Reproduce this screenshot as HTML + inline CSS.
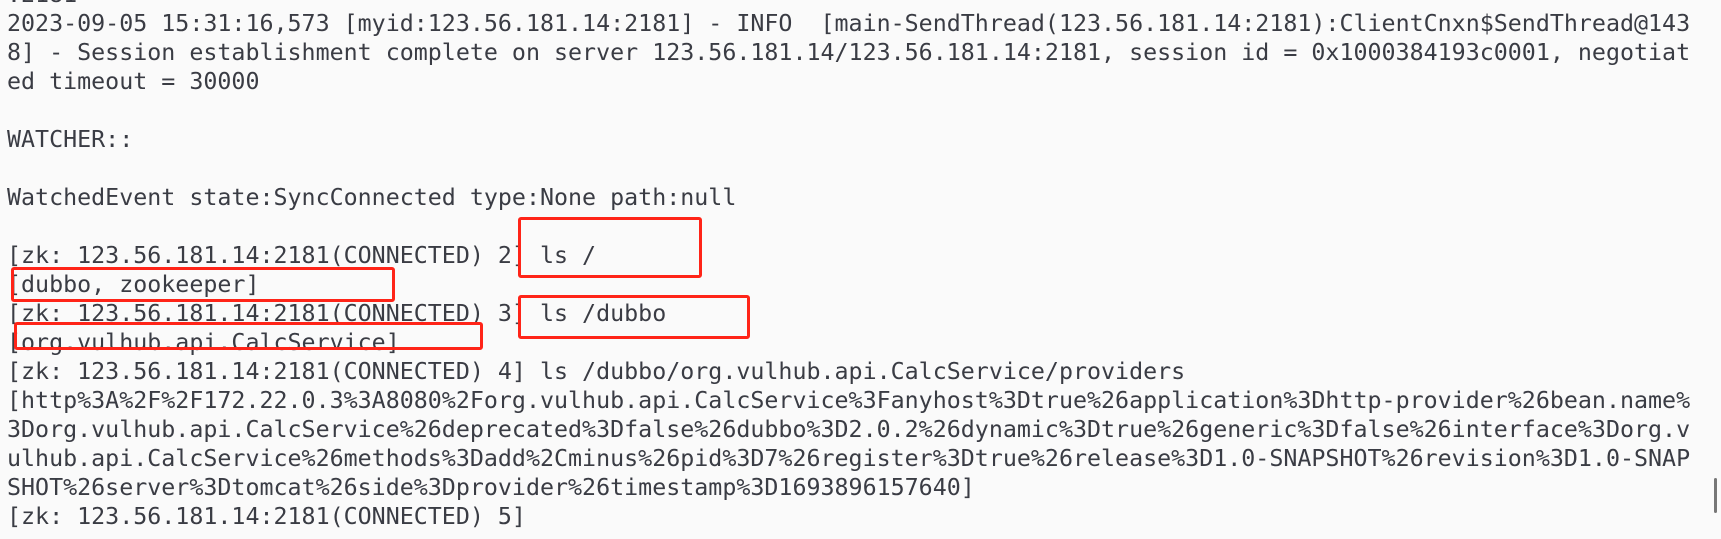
<!DOCTYPE html>
<html><head><meta charset="utf-8"><style>
html,body{margin:0;padding:0;background:#fafafa;width:1721px;height:539px;overflow:hidden;position:relative}
pre{position:absolute;left:7px;top:-20.5px;margin:0;font-family:"DejaVu Sans Mono","Liberation Mono",monospace;font-size:23.3px;line-height:29px;color:#3a3c44;white-space:pre;letter-spacing:0}
.b{position:absolute;border:3px solid #ff2418;border-radius:3px;box-sizing:border-box}
.sb{position:absolute;left:1714px;top:478px;width:3px;height:35px;background:#777;border-radius:2px}
</style></head><body>
<pre>:2181
2023-09-05 15:31:16,573 [myid:123.56.181.14:2181] - INFO  [main-SendThread(123.56.181.14:2181):ClientCnxn$SendThread@143
8] - Session establishment complete on server 123.56.181.14/123.56.181.14:2181, session id = 0x1000384193c0001, negotiat
ed timeout = 30000

WATCHER::

WatchedEvent state:SyncConnected type:None path:null

[zk: 123.56.181.14:2181(CONNECTED) 2] ls /
[dubbo, zookeeper]
[zk: 123.56.181.14:2181(CONNECTED) 3] ls /dubbo
[org.vulhub.api.CalcService]
[zk: 123.56.181.14:2181(CONNECTED) 4] ls /dubbo/org.vulhub.api.CalcService/providers
[http%3A%2F%2F172.22.0.3%3A8080%2Forg.vulhub.api.CalcService%3Fanyhost%3Dtrue%26application%3Dhttp-provider%26bean.name%
3Dorg.vulhub.api.CalcService%26deprecated%3Dfalse%26dubbo%3D2.0.2%26dynamic%3Dtrue%26generic%3Dfalse%26interface%3Dorg.v
ulhub.api.CalcService%26methods%3Dadd%2Cminus%26pid%3D7%26register%3Dtrue%26release%3D1.0-SNAPSHOT%26revision%3D1.0-SNAP
SHOT%26server%3Dtomcat%26side%3Dprovider%26timestamp%3D1693896157640]
[zk: 123.56.181.14:2181(CONNECTED) 5]</pre>
<div class="b" style="left:518px;top:217px;width:184px;height:61px"></div>
<div class="b" style="left:11px;top:267px;width:384px;height:35px"></div>
<div class="b" style="left:518px;top:295px;width:232px;height:44px"></div>
<div class="b" style="left:14px;top:322px;width:469px;height:28px"></div>
<div class="sb"></div>
</body></html>
